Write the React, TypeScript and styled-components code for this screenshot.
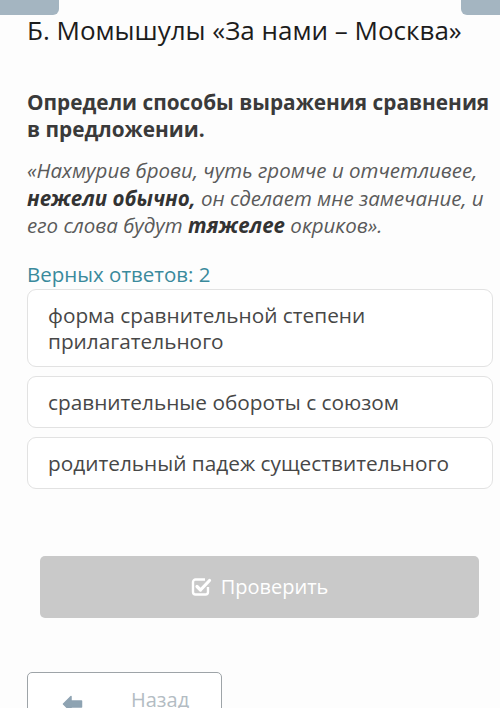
import React from 'react';
import styled, {createGlobalStyle} from "styled-components";

const GlobalStyle = createGlobalStyle`
  html, body {
    margin: 0;
    padding: 0;
    background: #fdfdfd;
    font-family: "Open Sans", "Noto Sans", sans-serif;
    overflow: hidden;
  }
`

const options = [
    "форма сравнительной степени прилагательного",
    "сравнительные обороты с союзом",
    "родительный падеж существительного",
]

const CheckIcon = () => (
    <svg width="21" height="19" viewBox="0 0 21 19" fill="none">
        <path d="M14 2.5 H4.5 A2.5 2.5 0 0 0 2 5 V15 A2.5 2.5 0 0 0 4.5 17.5 H14.5 A2.5 2.5 0 0 0 17 15 V10" stroke="#fff" strokeWidth="2.4"/>
        <path d="M6 9.5 L9.5 13 L18.5 3.5" stroke="#fff" strokeWidth="3.2" strokeLinecap="round" strokeLinejoin="round"/>
    </svg>
)

const ArrowIcon = () => (
    <svg width="21" height="18" viewBox="0 0 21 18">
        <path d="M9 1.5 L1.5 9 L9 16.5 L9 12 L19.5 12 L19.5 6 L9 6 Z" fill="#8ea3b2" stroke="#8ea3b2" strokeWidth="1.5" strokeLinejoin="round"/>
    </svg>
)

export default function App() {
    return (
        <Page>
            <GlobalStyle/>
            <TopStrip>
                <Tab side={"left"} width={59}/>
                <Tab side={"right"} width={39}/>
            </TopStrip>
            <Content>
                <Title>Б. Момышулы «За нами – Москва»</Title>
                <Question>Определи способы выражения сравнения в предложении.</Question>
                <Quote>
                    «Нахмурив брови, чуть громче и отчетливее, <b>нежели обычно,</b> он сделает мне замечание, и
                    его слова будут <b>тяжелее</b> окриков».
                </Quote>
                <Counter>Верных ответов: 2</Counter>
                <OptionList>
                    {options.map(o => <Option key={o}>{o}</Option>)}
                </OptionList>
                <CheckButton>
                    <CheckIcon/>
                    Проверить
                </CheckButton>
                <BackButton>
                    <ArrowIcon/>
                    <span>Назад</span>
                </BackButton>
            </Content>
        </Page>
    );
}

const Page = styled.div`
  width: 500px;
  height: 708px;
  overflow: hidden;
`

const TopStrip = styled.div`
  display: flex;
  justify-content: space-between;
  height: 16px;
`

const Tab = styled.div<{side: "left" | "right"; width: number}>`
  width: ${p => p.width}px;
  height: 15px;
  background: #a4b5c1;
  border-bottom-${p => p.side === "left" ? "right" : "left"}-radius: 6px;
`

const Content = styled.div`
  padding: 0 7px 0 27px;
`

const Title = styled.h1`
  margin: 0;
  font-size: 26px;
  font-weight: 400;
  line-height: 28px;
  color: #1c1c1c;
  white-space: nowrap;
`

const Question = styled.h2`
  margin: 45px -7px 0 0;
  font-size: 20.8px;
  font-weight: 700;
  line-height: 27px;
  color: #3a3a3a;
`

const Quote = styled.p`
  margin: 14px 0 0;
  font-size: 20.5px;
  font-style: italic;
  line-height: 27.5px;
  color: #5a5a5a;

  b {
    color: #333;
    font-weight: 700;
  }
`

const Counter = styled.div`
  margin-top: 21px;
  font-size: 20.5px;
  line-height: 26px;
  color: #3a8a9c;
`

const OptionList = styled.div`
  display: flex;
  flex-direction: column;
  gap: 9px;
  margin-top: 2px;
`

const Option = styled.div`
  border: 1px solid #e2e2e2;
  border-radius: 9px;
  background: #fff;
  padding: 12px 30px 12px 20px;
  font-size: 20.8px;
  line-height: 26px;
  color: #474747;
`

const CheckButton = styled.div`
  display: flex;
  align-items: center;
  justify-content: center;
  gap: 9px;
  margin: 67px 14px 0 13px;
  height: 62px;
  border-radius: 5px;
  background: #c9c9c9;
  color: #fff;
  font-size: 20px;
`

const BackButton = styled.div`
  display: flex;
  align-items: flex-start;
  gap: 48px;
  margin-top: 54px;
  width: 195px;
  height: 56px;
  box-sizing: border-box;
  padding: 14px 0 0 34px;
  border: 1px solid #9ea4a8;
  border-radius: 5px;
  background: #fff;
  color: #b3bcc3;
  font-size: 20px;
  line-height: 26px;

  svg {
    margin-top: 8px;
  }
`
